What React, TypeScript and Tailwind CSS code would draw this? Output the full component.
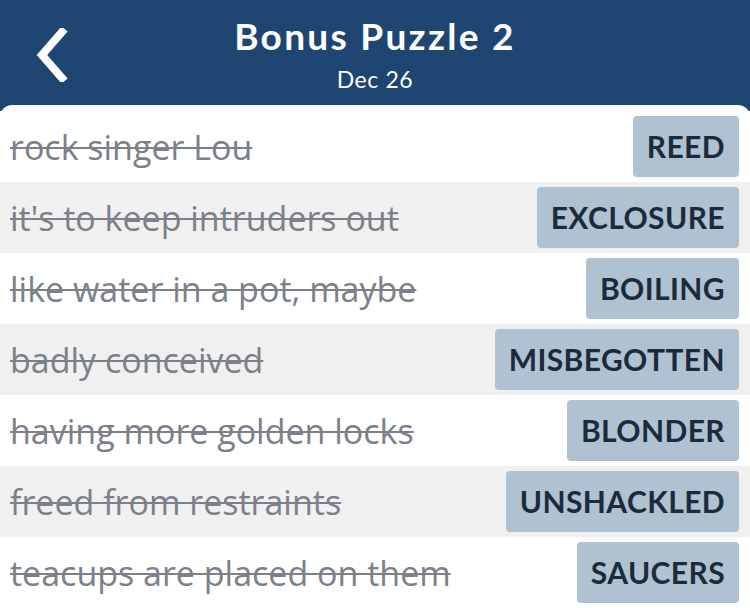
const clues = [
  { clue: 'rock singer Lou', answer: 'REED' },
  { clue: "it's to keep intruders out", answer: 'EXCLOSURE' },
  { clue: 'like water in a pot, maybe', answer: 'BOILING' },
  { clue: 'badly conceived', answer: 'MISBEGOTTEN' },
  { clue: 'having more golden locks', answer: 'BLONDER' },
  { clue: 'freed from restraints', answer: 'UNSHACKLED' },
  { clue: 'teacups are placed on them', answer: 'SAUCERS' },
];

export default function App() {
  return (
    <div className="w-[750px] h-[608px] overflow-hidden bg-[#1f4672] font-['Lato','Liberation_Sans',sans-serif]">
      {/* Kopf */}
      <header className="relative h-[105px] flex flex-col items-center text-white">
        <button className="absolute left-[30px] top-[24px] p-1" aria-label="Back">
          <svg width="34" height="54" viewBox="0 0 34 54" fill="none">
            <path d="M28 4 L8 27 L28 50" stroke="white" strokeWidth="8" strokeLinecap="square" strokeLinejoin="miter" />
          </svg>
        </button>
        <h1 className="mt-[13px] text-[37px] leading-[46px] font-bold tracking-[2.3px]">Bonus Puzzle 2</h1>
        <p className="text-[23px] leading-[26px] mt-[7px] tracking-[0.6px]">Dec 26</p>
      </header>

      {/* Liste */}
      <div className="bg-white rounded-t-[12px] pt-[6px] h-[503px]">
        {clues.map((c, i) => (
          <div
            key={c.answer}
            className={`h-[71px] flex items-center justify-between pl-[10px] pr-[11px] ${i % 2 === 1 ? 'bg-[#f0f0f0]' : 'bg-white'}`}
          >
            <span className="font-['Open_Sans','Liberation_Sans',sans-serif] text-[34px] leading-[40px] text-[#7b8089] line-through decoration-[2px] decoration-[#7b8089]">
              {c.clue}
            </span>
            <span className="h-[61px] flex items-center px-[14px] rounded-[4px] bg-[#b0c1d1] text-[#1c2b3c] text-[30px] font-bold tracking-[0.4px]">
              {c.answer}
            </span>
          </div>
        ))}
      </div>
    </div>
  );
}
